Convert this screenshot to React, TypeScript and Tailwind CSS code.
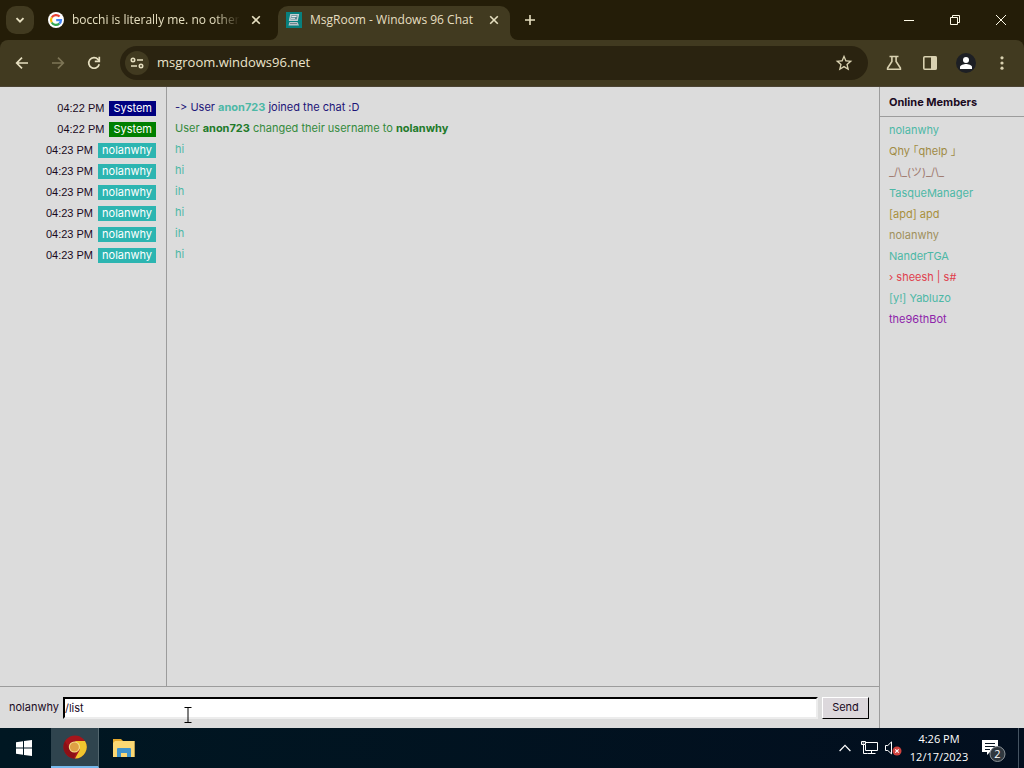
import { useState } from 'react';
import type { ReactNode } from 'react';

const TEAL = 'text-[#4db8a6]';

type Message = { time: string; user: string; badge: string; tone: string; body: ReactNode };

const nolan = (body: string): Message => ({
  time: '04:23 PM',
  user: 'nolanwhy',
  badge: 'bg-[#2cb5b1]',
  tone: TEAL,
  body,
});

const messages: Message[] = [
  {
    time: '04:22 PM',
    user: 'System',
    badge: 'bg-[#000080]',
    tone: 'text-[#1c1478]',
    body: (
      <>
        -&gt; User <b className="text-[#4db8a6]">anon723</b> joined the chat :D
      </>
    ),
  },
  {
    time: '04:22 PM',
    user: 'System',
    badge: 'bg-[#008000]',
    tone: 'text-[#348a3c]',
    body: (
      <>
        User <b className="text-[#227a2a]">anon723</b> changed their username to{' '}
        <b className="text-[#227a2a]">nolanwhy</b>
      </>
    ),
  },
  nolan('hi'),
  nolan('hi'),
  nolan('ih'),
  nolan('hi'),
  nolan('ih'),
  nolan('hi'),
];

const members = [
  { name: 'nolanwhy', tone: TEAL },
  { name: 'Qhy ｢qhelp ｣', tone: 'text-[#a08b45]' },
  { name: '_/\\_(ツ)_/\\_', tone: 'text-[#a07a70]' },
  { name: 'TasqueManager', tone: TEAL },
  { name: '[apd] apd', tone: 'text-[#a8903c]' },
  { name: 'nolanwhy', tone: 'text-[#a0905c]' },
  { name: 'NanderTGA', tone: TEAL },
  { name: '› sheesh | s#', tone: 'text-[#e0404c]' },
  { name: '[y!] Yabluzo', tone: TEAL },
  { name: 'the96thBot', tone: 'text-[#8e24aa]' },
];

function GoogleIcon() {
  return (
    <svg viewBox="0 0 16 16" className="size-4 shrink-0" aria-hidden="true">
      <circle cx="8" cy="8" r="8" fill="#fff" />
      <g fill="none" strokeWidth="2.2">
        <path d="M11.6 4.6A5 5 0 0 0 3.7 5.5" stroke="#ea4335" />
        <path d="M3.7 5.5a5 5 0 0 0 0 5" stroke="#fbbc05" />
        <path d="M3.7 10.5a5 5 0 0 0 7.6 1.2" stroke="#34a853" />
        <path d="M11.3 11.7A5 5 0 0 0 13 8.1H8.2" stroke="#4285f4" />
      </g>
    </svg>
  );
}

function RoomIcon() {
  return (
    <svg viewBox="0 0 16 16" className="size-4 shrink-0" aria-hidden="true">
      <rect width="16" height="16" fill="#08807e" />
      <path d="M4.2 2h9l-1.4 7H2.8z" fill="#c5cfd2" />
      <path d="M5.4 3.3h6.2l-.8 4.2H4.5z" fill="#5b8791" />
      <path d="M5.5 4.5h5M5 6.3h4" stroke="#e5e9ea" />
      <path d="M3.5 10h8l1.5 3.5H2.5z" fill="#b8c3c8" />
      <path d="M4 11.5h7" stroke="#6d858f" />
    </svg>
  );
}

function CloseIcon() {
  return (
    <svg viewBox="0 0 10 10" className="size-[10px]" stroke="currentColor" strokeWidth="1.6" aria-hidden="true">
      <path d="M1.2 1.2l7.6 7.6M8.8 1.2L1.2 8.8" />
    </svg>
  );
}

function TabStrip() {
  return (
    <div className="flex h-10 shrink-0 items-end bg-[#241d08] text-[#e6dfc0]">
      <button aria-label="Search tabs" className="mb-1.5 ml-1.5 flex size-7 items-center justify-center rounded-[10px] bg-[#413a20]">
        <svg viewBox="0 0 12 12" className="size-3" fill="none" stroke="currentColor" strokeWidth="1.9" aria-hidden="true">
          <path d="M2.5 4.2L6 7.7l3.5-3.5" />
        </svg>
      </button>
      <div className="flex h-[34px] w-[236px] items-center pb-1.5 pl-3.5">
        <GoogleIcon />
        <span className="ml-2 w-[168px] text-[12px] font-medium whitespace-nowrap [mask-image:linear-gradient(to_right,black_85%,transparent)]">
          bocchi is literally me. no other
        </span>
        <button aria-label="Close tab" className="ml-2 flex size-4 shrink-0 items-center justify-center">
          <CloseIcon />
        </button>
      </div>
      <div className="flex items-end">
        <svg viewBox="0 0 8 8" className="size-2" fill="#413a20" aria-hidden="true">
          <path d="M8 0v8H0a8 8 0 0 0 8-8z" />
        </svg>
        <div className="flex h-[34px] w-[232px] items-center rounded-t-[10px] bg-[#413a20] pb-1.5 pl-2">
          <RoomIcon />
          <span className="ml-2 flex-1 text-[12px] font-medium whitespace-nowrap">MsgRoom - Windows 96 Chat</span>
          <button aria-label="Close tab" className="mr-2 flex size-4 items-center justify-center">
            <CloseIcon />
          </button>
        </div>
        <svg viewBox="0 0 8 8" className="size-2" fill="#413a20" aria-hidden="true">
          <path d="M0 0v8h8a8 8 0 0 1-8-8z" />
        </svg>
      </div>
      <button aria-label="New tab" className="mb-1.5 ml-1 flex h-7 w-4 items-center justify-center">
        <svg viewBox="0 0 12 12" className="size-3 shrink-0" stroke="currentColor" strokeWidth="1.6" aria-hidden="true">
          <path d="M6 1v10M1 6h10" />
        </svg>
      </button>
      <div className="ml-auto flex h-10 text-[#fffbe8]">
        <button aria-label="Minimize" className="flex w-[46px] items-center justify-center">
          <svg viewBox="0 0 10 10" className="size-[10px]" stroke="currentColor" aria-hidden="true">
            <path d="M0 5.5h10" />
          </svg>
        </button>
        <button aria-label="Restore" className="flex w-[46px] items-center justify-center">
          <svg viewBox="0 0 10 10" className="size-[10px]" fill="none" stroke="currentColor" aria-hidden="true">
            <path d="M.5 2.5h7v7h-7zM2.5 2.5v-2h7v7h-2" />
          </svg>
        </button>
        <button aria-label="Close" className="flex w-[46px] items-center justify-center">
          <svg viewBox="0 0 10 10" className="size-[10px]" stroke="currentColor" aria-hidden="true">
            <path d="M0 0l10 10M10 0L0 10" />
          </svg>
        </button>
      </div>
    </div>
  );
}

function Toolbar() {
  return (
    <div className="shrink-0 bg-[#241d08]">
      <div className="flex h-[47px] items-center rounded-t-lg border-b border-[#4b4333] bg-[#413a20] text-[#d9d1b0]">
        <button aria-label="Back" className="ml-3 flex size-5 items-center justify-center">
          <svg viewBox="0 0 16 16" className="size-4" fill="none" stroke="#e6dfc0" strokeWidth="1.7" aria-hidden="true">
            <path d="M14 8H3M8 2.7L2.7 8 8 13.3" />
          </svg>
        </button>
        <button aria-label="Forward" className="ml-4 flex size-5 items-center justify-center">
          <svg viewBox="0 0 16 16" className="size-4" fill="none" stroke="#7d7556" strokeWidth="1.7" aria-hidden="true">
            <path d="M2 8h11M8 2.7L13.3 8 8 13.3" />
          </svg>
        </button>
        <button aria-label="Reload" className="ml-4 flex size-5 items-center justify-center">
          <svg viewBox="0 0 16 16" className="size-4" fill="none" stroke="#e6dfc0" strokeWidth="1.7" aria-hidden="true">
            <path d="M13.2 9.2A5.3 5.3 0 1 1 12 4.4l1.4 1.4" />
            <path d="M13.3 1.7v4.6H8.8" />
          </svg>
        </button>
        <div className="ml-4 flex h-[34px] flex-1 items-center rounded-full bg-[#2a2310] pr-3.5 pl-[5px]">
          <button aria-label="Site information" className="flex size-6 items-center justify-center rounded-full bg-[#413a20]">
            <svg viewBox="0 0 14 12" className="h-3 w-3.5" fill="none" stroke="#e6dfc0" strokeWidth="1.6" aria-hidden="true">
              <circle cx="3" cy="3" r="1.7" />
              <path d="M7 3h6M1 9h6" />
              <circle cx="11" cy="9" r="1.7" />
            </svg>
          </button>
          <input
            aria-label="Address"
            defaultValue="msgroom.windows96.net"
            className="ml-2 min-w-0 flex-1 bg-transparent text-[13px] text-[#ece5cc] outline-none"
          />
          <button aria-label="Bookmark" className="flex size-5 items-center justify-center">
            <svg viewBox="0 0 24 24" className="size-5" fill="currentColor" aria-hidden="true">
              <path d="M22 9.24l-7.19-.62L12 2 9.19 8.63 2 9.24l5.46 4.73L5.82 21 12 17.27 18.18 21l-1.63-7.03L22 9.24zM12 15.4l-3.76 2.27 1-4.28-3.32-2.88 4.38-.38L12 6.1l1.71 4.04 4.38.38-3.32 2.88 1 4.28L12 15.4z" />
            </svg>
          </button>
        </div>
        <div className="mr-3 ml-4 flex items-center gap-4">
          <button aria-label="Labs" className="flex size-5 items-center justify-center">
            <svg viewBox="0 0 16 16" className="size-4" fill="none" stroke="currentColor" strokeWidth="1.6" aria-hidden="true">
              <path d="M3.5 1.5h9M5.9 1.5v5L1.6 13v1.3h12.8V13l-4.3-6.5v-5" />
            </svg>
          </button>
          <button aria-label="Side panel" className="flex size-5 items-center justify-center">
            <svg viewBox="0 0 16 16" className="size-4" aria-hidden="true">
              <rect x="1.8" y="1.8" width="12.4" height="12.4" rx="1" fill="none" stroke="currentColor" strokeWidth="1.6" />
              <path d="M9 1.5h5.5v13H9z" fill="currentColor" />
            </svg>
          </button>
          <button aria-label="Profile" className="flex size-5 items-center justify-center rounded-full bg-[#1d1f24]">
            <svg viewBox="0 0 14 14" className="size-3.5" fill="#fff" aria-hidden="true">
              <circle cx="7" cy="4" r="3" />
              <path d="M1 13v-2c0-2 4-3 6-3s6 1 6 3v2z" />
            </svg>
          </button>
          <button aria-label="Menu" className="flex size-5 items-center justify-center">
            <svg viewBox="0 0 4 16" className="h-4 w-1" fill="currentColor" aria-hidden="true">
              <circle cx="2" cy="2.8" r="1.6" />
              <circle cx="2" cy="8" r="1.6" />
              <circle cx="2" cy="13.2" r="1.6" />
            </svg>
          </button>
        </div>
      </div>
    </div>
  );
}

function ChatRoom() {
  const [draft, setDraft] = useState('/list');
  return (
    <main className="relative flex min-h-0 flex-1 bg-[#dcdcdc] font-[Inter,'Liberation_Sans','Noto_Sans_CJK_JP',sans-serif] text-[11px] leading-[15px] text-[#1a0a1e] [font-variant-ligatures:none]">
      <section className="flex min-w-0 flex-1 flex-col" aria-label="Chat">
        <div className="flex min-h-0 flex-1">
          <ul className="w-[167px] shrink-0 border-r border-[#9c9c9c] pt-[11px] pr-2.5">
            {messages.map((m, i) => (
              <li key={i} className="flex h-[21px] items-center justify-end gap-[5px]">
                <time className="font-['Liberation_Sans',sans-serif]">{m.time}</time>
                <span className={`${m.badge} px-1 text-white`}>{m.user}</span>
              </li>
            ))}
          </ul>
          <ul className="min-w-0 flex-1 pt-2.5 pl-2">
            {messages.map((m, i) => (
              <li key={i} className={`h-[21px] leading-[21px] ${m.tone}`}>
                {m.body}
              </li>
            ))}
          </ul>
        </div>
        <form
          onSubmit={(e) => e.preventDefault()}
          className="flex h-[42px] shrink-0 items-center border-t border-[#9c9c9c] pr-2.5 pl-[9px]"
        >
          <label htmlFor="draft">nolanwhy</label>
          <input
            id="draft"
            value={draft}
            onChange={(e) => setDraft(e.target.value)}
            className="ml-1 h-[22px] min-w-0 flex-1 border-2 border-t-black border-r-[#ececec] border-b-[#ececec] border-l-black bg-white outline-none"
          />
          <button
            type="submit"
            className="ml-1 h-[22px] w-[47px] border border-t-white border-r-black border-b-black border-l-white bg-[#dcd8dc]"
          >
            Send
          </button>
        </form>
      </section>
      <aside className="w-[145px] shrink-0 border-l border-[#9c9c9c]">
        <h2 className="h-[30px] border-b border-[#9c9c9c] pl-[9px] leading-[30px] font-bold">Online Members</h2>
        <ul className="pt-[3px] pl-[9px]">
          {members.map((m, i) => (
            <li key={i} className={`h-[21px] leading-[21px] whitespace-nowrap ${m.tone}`}>
              {m.name}
            </li>
          ))}
        </ul>
      </aside>
      <svg viewBox="0 0 8 16" className="absolute bottom-[5px] left-[184px] h-4 w-2" fill="none" stroke="#000" aria-hidden="true">
        <path d="M.5 .5h7M4 .5v15M.5 15.5h7" />
      </svg>
    </main>
  );
}

function Taskbar() {
  return (
    <footer className="flex h-10 shrink-0 items-center bg-gradient-to-r from-[#001722] to-[#020e1e] text-white">
      <button aria-label="Start" className="flex h-10 w-[51px] items-center justify-center pr-1">
        <svg viewBox="0 0 16 16" className="size-4" fill="#fff" aria-hidden="true">
          <path d="M0 2.2l7-1v6.3H0zM8 1l8-1v7.5H8zM0 8.5h7v6.3l-7-1zM8 8.5h8V16l-8-1.1z" />
        </svg>
      </button>
      <button aria-label="Google Chrome" className="flex h-10 w-[48px] items-center justify-center border-r border-b-2 border-r-[#53666e] border-b-[#76b9ed] bg-[#2f444e]">
        <svg viewBox="0 0 24 24" className="size-6" aria-hidden="true">
          <circle cx="12" cy="12" r="11.5" fill="#a5151b" />
          <path d="M12 6h10A11.5 11.5 0 0 1 12 23.5l4.8-8.7z" fill="#f0c52e" />
          <path d="M2 6.3L7 15a6 6 0 0 0 6 2.8L10.5 23.4A11.5 11.5 0 0 1 2 6.3z" fill="#8c1016" />
          <circle cx="11.4" cy="12" r="5.6" fill="#f3dc8b" />
          <circle cx="11.4" cy="12" r="4.5" fill="#dfa044" />
        </svg>
      </button>
      <button aria-label="File Explorer" className="flex h-10 w-[49px] items-center justify-center">
        <svg viewBox="0 0 22 20" className="h-5 w-[22px]" aria-hidden="true">
          <path d="M0 1h8l2 2h11.5v16H0z" fill="#e5a92d" />
          <path d="M2 3h19.5v16H0V5z" fill="#fbd873" />
          <path d="M4 11q0-1 1-1h12q1 0 1 1v8h-4v-4H8v4H4z" fill="#3f93cc" />
        </svg>
      </button>
      <div className="ml-auto flex h-10 items-center">
        <button aria-label="Show hidden icons" className="flex w-5 justify-center">
          <svg viewBox="0 0 12 8" className="h-2 w-3" fill="none" stroke="currentColor" strokeWidth="1.2" aria-hidden="true">
            <path d="M.6 7L6 1.4 11.4 7" />
          </svg>
        </button>
        <svg viewBox="0 0 17 14" className="ml-1.5 h-3.5 w-[17px]" fill="none" stroke="currentColor" role="img" aria-label="Network">
          <path d="M5 1.5h11.5v8H4.5V4M10.5 9.5v3M6.5 12.5h8M.5 .5h4v3h-4zM2.5 3.5v9h4M1.5 2h2" />
        </svg>
        <svg viewBox="0 0 17 16" className="ml-[7px] h-4 w-[17px]" role="img" aria-label="Muted">
          <path d="M.5 5.5h2.3l3.7-3.6v12L2.8 10.5H.5z" fill="none" stroke="currentColor" />
          <circle cx="12" cy="11" r="4.5" fill="#d0423e" />
          <path d="M10.3 9.3l3.4 3.4M13.7 9.3l-3.4 3.4" stroke="#fff" strokeWidth="1.1" />
        </svg>
        <div className="ml-1 flex w-[66px] flex-col items-center text-[11px] leading-[18px] whitespace-nowrap">
          <time>4:26 PM</time>
          <span>12/17/2023</span>
        </div>
        <button aria-label="2 notifications" className="ml-2.5 flex h-7 w-6 items-center justify-center">
          <svg viewBox="0 0 24 28" className="h-7 w-6 shrink-0" aria-hidden="true">
            <path d="M0 6h16v12h-8l-3 3v-3H0z" fill="#fff" />
            <path d="M3 9.5h10M3 12.5h10M3 15.5h5" stroke="#071522" />
            <circle cx="15.5" cy="20" r="7.5" fill="#30383f" stroke="#8b9298" />
            <text x="15.5" y="24" textAnchor="middle" fontSize="11" fill="#fff">
              2
            </text>
          </svg>
        </button>
        <div className="ml-3 h-10 w-[6px] border-l border-[#455361]" />
      </div>
    </footer>
  );
}

export default function App() {
  return (
    <div className="flex h-screen flex-col overflow-hidden font-['Open_Sans','Noto_Sans',sans-serif]">
      <TabStrip />
      <Toolbar />
      <ChatRoom />
      <Taskbar />
    </div>
  );
}
